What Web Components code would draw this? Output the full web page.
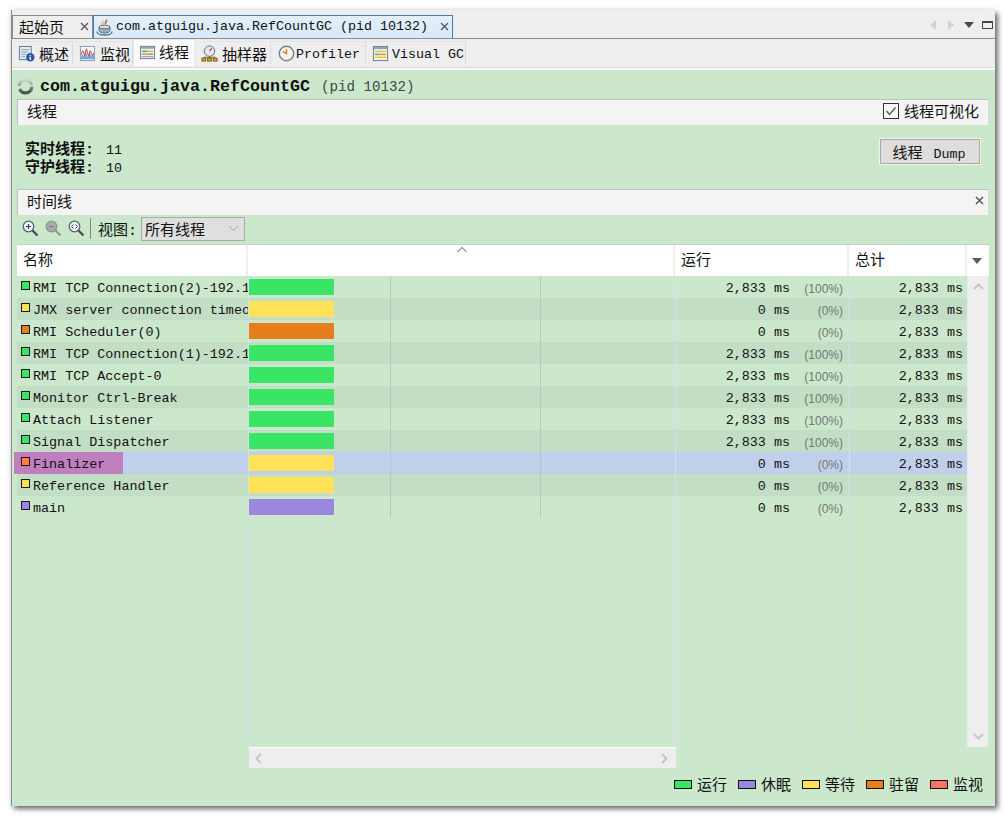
<!DOCTYPE html>
<html>
<head>
<meta charset="utf-8">
<style>
  html, body { margin: 0; padding: 0; background: #fff; }
  body { width: 1005px; height: 816px; overflow: hidden; padding: 10px 0 0 11px; box-sizing: border-box;
    font-family: "Liberation Mono", "Noto Sans CJK SC", monospace; font-size: 13.33px; color: #111; }
</style>
</head>
<body>
<vm-window></vm-window>
<script>
const CJK = `"Liberation Mono", "Noto Sans CJK SC", monospace`;

// icons for the tabs and the toolbar, all on a 18x18 box
const icons = {
  java: `<svg width="18" height="18" viewBox="0 0 18 18"><path d="M10 0c2 2-3 3-1 7 1-2 4-3 1-7z" fill="#e0702a"/><path d="M7 3c-1 1.500 0 3 0 4" fill="none" stroke="#e9a35f" stroke-width="1.200"/><path d="M3 9h11v3c0 2-2 3-5.500 3S3 14 3 12z" fill="#9aacbd" stroke="#5d7287"/><ellipse cx="8.500" cy="9" rx="5.500" ry="1.800" fill="#d9e1e8" stroke="#5d7287"/><path d="M1 13.500c0 2.500 4 3.500 7.500 3.500s7.500-1 7.500-3.500" fill="none" stroke="#5f7386" stroke-width="1.300"/></svg>`,
  info: `<svg width="18" height="18" viewBox="0 0 18 18"><rect x="1.500" y="1.500" width="12.500" height="14" fill="#e6ebf2" stroke="#5f7894"/><path d="M3.500 5h8.500M3.500 7.500h7M3.500 10h5M3.500 12.500h4" stroke="#8499b2"/><circle cx="13" cy="13" r="4.500" fill="#2a5da8"/><path d="M13 10.500v1M13 12.500v3" stroke="#fff" stroke-width="1.500"/></svg>`,
  monitor: `<svg width="18" height="18" viewBox="0 0 18 18"><rect x="1.500" y="1.500" width="15" height="15" fill="#f4f6f9" stroke="#8a9bb0"/><path d="M2 15l1-6 2 3 2-7 2 8 2-6 2 5 2-3 1 3v3z" fill="#6fa7dc"/><path d="M2 10l2-4 2 5 2-7 2 8 2-6 2 5 2-3" fill="none" stroke="#d9463c"/></svg>`,
  threads: `<svg width="18" height="18" viewBox="0 0 18 18"><rect x="1.500" y="2.500" width="15" height="13" fill="#eef1f4" stroke="#6b7b8c"/><rect x="2" y="3" width="14" height="2" fill="#8ea4bd"/><rect x="3" y="7" width="6" height="1.500" fill="#49b04c"/><rect x="9" y="7" width="6" height="1.500" fill="#e3b23a"/><rect x="3" y="10" width="8" height="1.500" fill="#e08a2c"/><rect x="11" y="10" width="4" height="1.500" fill="#49b04c"/><rect x="3" y="13" width="12" height="1" fill="#8a7fd0"/></svg>`,
  sampler: `<svg width="18" height="18" viewBox="0 0 18 18"><circle cx="9" cy="6.500" r="5.500" fill="#e4e9ef" stroke="#5f6e7d"/><path d="M9 6.500L11.500 3.500" stroke="#c33" stroke-width="1.200"/><path d="M3 13h12M3 13v2M9 12v3M15 13v2" stroke="#8a6420"/><rect x="1" y="14" width="4" height="3" fill="#e8a93a" stroke="#7a5516"/><rect x="7" y="14" width="4" height="3" fill="#e8a93a" stroke="#7a5516"/><rect x="13" y="14" width="4" height="3" fill="#e8a93a" stroke="#7a5516"/></svg>`,
  clock: `<svg width="18" height="18" viewBox="0 0 18 18"><circle cx="9" cy="9" r="7.600" fill="#f8f3e6" stroke="#6f8496" stroke-width="1.500"/><path d="M9 4.500V9L5 7" fill="none" stroke="#e07b2a" stroke-width="1.500"/></svg>`,
  gc: `<svg width="18" height="18" viewBox="0 0 18 18"><rect x="1.500" y="1.500" width="15" height="15" fill="#f7f7ee" stroke="#6b7b8c"/><rect x="2" y="2" width="14" height="2.500" fill="#8ea4bd"/><path d="M3 7h12" stroke="#e6c32c" stroke-width="1.500"/><path d="M3 10h6" stroke="#49b04c" stroke-width="1.500"/><path d="M9 10h6" stroke="#e08a2c" stroke-width="1.500"/><path d="M3 13h12" stroke="#e6c32c" stroke-width="1.500"/><path d="M8 5v11" stroke="#c9ccd0"/></svg>`,
  zoomIn: `<svg width="18" height="18" viewBox="0 0 18 18"><circle cx="6.500" cy="6.500" r="5.300" fill="#eef4f8" stroke="#566573" stroke-width="1.300"/><path d="M4 6.500h5M6.500 4v5" stroke="#33414e" stroke-width="1.200"/><path d="M10.500 10.500l5 5" stroke="#3c4852" stroke-width="2.200"/></svg>`,
  zoomOut: `<svg width="18" height="18" viewBox="0 0 18 18"><circle cx="6.500" cy="6.500" r="5.300" fill="#a3afa8" stroke="#8b968f" stroke-width="1.300"/><path d="M4 6.500h5" stroke="#77827b" stroke-width="1.200"/><path d="M10.500 10.500l5 5" stroke="#8f9a93" stroke-width="2.200"/></svg>`,
  zoomFit: `<svg width="18" height="18" viewBox="0 0 18 18"><circle cx="6.500" cy="6.500" r="5.300" fill="#eef4f8" stroke="#566573" stroke-width="1.300"/><path d="M5.500 4.500l-2 2 2 2M7.500 4.500l2 2-2 2" fill="none" stroke="#33414e"/><path d="M10.500 10.500l5 5" stroke="#3c4852" stroke-width="2.200"/></svg>`
};

class VmTab extends HTMLElement {
  constructor() {
    super();
    this.attachShadow({ mode: 'open' });
    this.shadowRoot.innerHTML = `
      <style>
        :host { display: flex; align-items: center; box-sizing: border-box; height: 23px; white-space: nowrap;
          padding: 0 3px 1px 6px; background: #eeeeee; border: 1px solid #8d8d8d; border-bottom: none; font: 15px ${CJK}; color: #111; }
        :host([active]) { background: linear-gradient(#e3effb, #d9e9f9); border-color: #3c7fb1; padding-left: 2px; }
        .x { margin-left: auto; width: 9px; height: 9px; flex: none; }
        ::slotted(svg) { margin-right: 2px; flex: none; }
      </style>
      <slot></slot>
      <svg class="x" viewBox="0 0 9 9"><path d="M1 1l7 7M8 1l-7 7" stroke="#555" stroke-width="1.300"/></svg>`;
  }
}
customElements.define('vm-tab', VmTab);

class VmSubtab extends HTMLElement {
  constructor() {
    super();
    this.attachShadow({ mode: 'open' });
    this.shadowRoot.innerHTML = `
      <style>
        :host { display: flex; align-items: center; box-sizing: border-box; height: 24px; flex: none;
          background: #eeeeee; border-right: 1px solid #dcdcdc; border-top: 1px solid #e4e4e4;
          font: 15px ${CJK}; color: #111; white-space: nowrap; }
        :host([active]) { background: #fbfbfb; height: 27px; margin-top: -2px; padding-bottom: 2px; border: 1px solid #e8e8e8; border-bottom: none; }
        ::slotted(svg) { width: 17px; height: 17px; flex: none; }
      </style>
      <slot></slot>`;
  }
}
customElements.define('vm-subtab', VmSubtab);

class VmBar extends HTMLElement {
  constructor() {
    super();
    this.attachShadow({ mode: 'open' });
    this.shadowRoot.innerHTML = `
      <style>
        :host { display: flex; align-items: center; box-sizing: border-box; height: 26px; margin: 0 6px 0 5px; padding: 0 9px 4px 9px;
          background: #f4f4f4; border-left: 1px solid #b9c4ba; border-top: 1px solid #b9c4ba; border-right: 1px solid #d4dcd5; font: 15px ${CJK}; color: #111; }
        .end { margin-left: auto; display: flex; align-items: center; }
      </style>
      <slot></slot><span class="end"><slot name="end"></slot></span>`;
  }
}
customElements.define('vm-bar', VmBar);

class VmRow extends HTMLElement {
  constructor() {
    super();
    this.attachShadow({ mode: 'open' });
  }
  connectedCallback() {
    const name = this.getAttribute('name');
    const state = this.getAttribute('state');
    const bar = this.getAttribute('bar') || state;
    this.shadowRoot.innerHTML = `
      <style>
        :host { display: grid; grid-template-columns: 231px 427px 174px 118px; height: 22px; font: 13.400px ${CJK}; color: #111; }
        :host([alt]) { background: #c2dfc6; }
        :host([selected]) { background: #c0d0ec; }
        .name { display: flex; align-items: center; overflow: hidden; white-space: nowrap; padding-left: 4px; box-sizing: border-box; }
        :host([selected]) .name { overflow: visible; }
        .label { display: flex; align-items: center; height: 22px; min-width: 0; }
        :host([selected]) .label { background: #bf7fbf; margin-left: -7px; padding: 0 18px 0 7px; }
        .dot { width: 7px; height: 7px; border: 1px solid #1a1a1a; background: ${state}; margin: -4px 3px 0 0; flex: none; }
        .clip { overflow: hidden; padding-top: 3px; }
        .chart { padding: 3px 0 3px 1px; box-sizing: border-box; }
        .chart i { display: block; width: 85px; height: 16px; background: ${bar}; }
        .num { display: flex; justify-content: flex-end; align-items: center; padding: 3px 4px 0 0; white-space: pre; box-sizing: border-box; }
        .run { padding-right: 5px; }
        .pct { color: #6e7a72; font: 12px "Liberation Sans", sans-serif; width: 54px; text-align: right; padding-right: 1px; box-sizing: border-box; }
      </style>
      <div class="name"><span class="label"><span class="dot"></span><span class="clip">${name}</span></span></div>
      <div class="chart"><i></i></div>
      <div class="num run"><span>${this.getAttribute('run')} ms</span><span class="pct">(${this.getAttribute('pct')}%)</span></div>
      <div class="num"><span>2,833 ms</span></div>`;
  }
}
customElements.define('vm-row', VmRow);

class VmTable extends HTMLElement {
  constructor() {
    super();
    this.attachShadow({ mode: 'open' });
    this.shadowRoot.innerHTML = `
      <style>
        :host { display: block; position: relative; margin: 2px 6px 0 5px; height: 524px; }
        .head { display: grid; grid-template-columns: 231px 427px 174px 118px 21px; height: 32px; background: #fff;
          border-top: 1px solid #c7cfc8; box-sizing: border-box; font: 15px ${CJK}; color: #111; }
        .head div { display: flex; align-items: center; padding: 0 0 3px 6px; border-right: 2px solid #eef0ef; box-sizing: border-box; position: relative; }
        .sort { position: absolute; top: 1px; left: 208px; }
        .menu { justify-content: center; padding: 0 !important; border: none !important; }
        .body { position: relative; height: 471px; display: grid; grid-template-columns: 950px 21px; }
        .rows { position: relative; }
        .lines { position: absolute; top: 0; left: 0; right: 0; height: 471px; pointer-events: none; }
        .lines i { position: absolute; top: 0; bottom: 0; width: 1px; background: #d3e0ee; }
        .lines b { position: absolute; top: 0; height: 242px; width: 1px; background: #bcc5bf; }
        .vs { background: #eeeeee; border-left: 1px solid #e5e9f4; display: flex; flex-direction: column; justify-content: space-between; align-items: center; padding: 7px 0 7px; box-sizing: border-box; }
        .hs { position: absolute; left: 232px; top: 503px; width: 427px; height: 21px; background: #eeeeee; border-top: 1px solid #fff;
          display: flex; justify-content: space-between; align-items: center; padding: 0 8px 0 6px; box-sizing: border-box; }
      </style>
      <div class="head">
        <div>名称</div>
        <div><svg class="sort" width="12" height="7" viewBox="0 0 12 7"><path d="M1.500 6L6 1.500 10.500 6" fill="none" stroke="#a4a4a4" stroke-width="1.500"/></svg></div>
        <div>运行</div>
        <div>总计</div>
        <div class="menu"><svg width="11" height="6" viewBox="0 0 11 6"><path d="M0 0h10L5 6z" fill="#5c5c5c"/></svg></div>
      </div>
      <div class="body">
        <div class="rows"><slot></slot>
          <div class="lines">
            <i style="left:231px"></i><i style="left:658px"></i><i style="left:832px"></i>
            <b style="left:373px"></b><b style="left:523px"></b>
          </div>
        </div>
        <div class="vs">
          <svg width="11" height="7" viewBox="0 0 11 7"><path d="M1 6l4.500-4.500L10 6" fill="none" stroke="#c6c6c6" stroke-width="2"/></svg>
          <svg width="11" height="7" viewBox="0 0 11 7"><path d="M1 1l4.500 4.500L10 1" fill="none" stroke="#c6c6c6" stroke-width="2"/></svg>
        </div>
      </div>
      <div class="hs">
        <svg width="7" height="11" viewBox="0 0 7 11"><path d="M6 1L1.500 5.500 6 10" fill="none" stroke="#c6c6c6" stroke-width="2"/></svg>
        <svg width="7" height="11" viewBox="0 0 7 11"><path d="M1 1l4.500 4.500L1 10" fill="none" stroke="#c6c6c6" stroke-width="2"/></svg>
      </div>`;
  }
}
customElements.define('vm-table', VmTable);

class VmLegend extends HTMLElement {
  constructor() {
    super();
    this.attachShadow({ mode: 'open' });
    const items = [['运行', '#3ae566'], ['休眠', '#9b87de'], ['等待', '#ffe257'], ['驻留', '#e67e1e'], ['监视', '#ff7261']];
    this.shadowRoot.innerHTML = `
      <style>
        :host { display: flex; justify-content: flex-end; gap: 11px; padding-right: 12px; font: 15px ${CJK}; color: #111; }
        span { display: flex; align-items: center; gap: 5px; height: 20px; }
        i { display: block; width: 16px; height: 7px; border: 1px solid #111; margin-top: 1px; }
      </style>
      ${items.map(([t, c]) => `<span><i style="background:${c}"></i>${t}</span>`).join('')}`;
  }
}
customElements.define('vm-legend', VmLegend);

const GREEN = '#3ae566', YELLOW = '#ffe257', ORANGE = '#e67e1e', PURPLE = '#9b87de';
const threads = [
  ['RMI TCP Connection(2)-192.1', GREEN, GREEN, '2,833', 100],
  ['JMX server connection timeo', YELLOW, YELLOW, '0', 0],
  ['RMI Scheduler(0)', ORANGE, ORANGE, '0', 0],
  ['RMI TCP Connection(1)-192.1', GREEN, GREEN, '2,833', 100],
  ['RMI TCP Accept-0', GREEN, GREEN, '2,833', 100],
  ['Monitor Ctrl-Break', GREEN, GREEN, '2,833', 100],
  ['Attach Listener', GREEN, GREEN, '2,833', 100],
  ['Signal Dispatcher', GREEN, GREEN, '2,833', 100],
  ['Finalizer', '#ff8040', YELLOW, '0', 0],
  ['Reference Handler', YELLOW, YELLOW, '0', 0],
  ['main', PURPLE, PURPLE, '0', 0]
];

class VmWindow extends HTMLElement {
  constructor() {
    super();
    this.attachShadow({ mode: 'open' });
    const rows = threads.map(([n, s, b, r, p], i) => {
      const alt = i % 2 === 1 ? ' alt' : '';
      const sel = n === 'Finalizer' ? ' selected' : '';
      return `<vm-row name="${n}" state="${s}" bar="${b}" run="${r}" pct="${p}"${alt}${sel}></vm-row>`;
    }).join('');
    this.shadowRoot.innerHTML = `
      <style>
        :host { display: flex; flex-direction: column; box-sizing: border-box; width: 984px; height: 796px; background: #eeeeee;
          border-left: 1px solid #8a8a8a; box-shadow: 3px 3px 5px rgba(0,0,0,.55), 0 0 6px rgba(0,0,0,.12); }
        .tabs { display: flex; flex: none; height: 29px; padding-top: 5px; box-sizing: border-box; border-bottom: 1px solid #8d8d90; }
        .tabs vm-tab:first-child { width: 81px; }
        .tabs vm-tab:nth-child(2) { width: 360px; }
        .lat { font-size: 13.330px; }
        .nav { margin-left: auto; display: flex; align-items: center; padding: 0 2px 4px 0; }
        .subs { display: flex; flex: none; height: 29px; padding: 2px 0 0 1px; box-sizing: border-box; border-bottom: 1px solid #d8d8d8; }
        .subs .lat { padding-top: 1px; }
        .main { flex: 1; background: #cbe8cd; border-top: 2px solid #fff; display: flex; flex-direction: column; min-height: 0; }
        .title { display: flex; align-items: center; height: 29px; padding: 4px 0 0 5px; box-sizing: border-box; font-size: 16.670px; }
        .title svg { margin-right: 6px; }
        .title b { font-weight: bold; }
        .title span { color: #3c4a44; font-size: 14.200px; margin-left: 11px; }
        .check { display: inline-flex; align-items: center; gap: 5px; }
        .stats { display: flex; align-items: flex-start; height: 64px; padding: 17px 7px 0 13px; box-sizing: border-box; }
        .stats dl { margin: 0; display: grid; grid-template-columns: 81px auto; grid-auto-rows: 18px; align-items: center; }
        dt { font: bold 15px/18px ${CJK}; height: 18px; }
        dd { margin: 0; line-height: 18px; }
        .dump { margin: -4px 7px 0 auto; width: 102px; height: 27px; box-sizing: border-box; background: #dddddd; border: 1px solid #f1f3f1; outline: 1px solid #a9a9a9; outline-offset: -2px;
          font: 13.330px ${CJK}; color: #111; padding: 0 2px 0 0; }
        .dump span { font-size: 15px; margin-right: 3px; }
        .tools { display: flex; align-items: center; height: 27px; padding-left: 10px; box-sizing: border-box; font-size: 15px; }
        .tools svg { margin-right: 5px; flex: none; }
        .sep { width: 1px; height: 21px; background: #7c877f; margin: 0 7px 0 -1px; }
        .select { display: flex; align-items: center; box-sizing: border-box; width: 104px; height: 24px; margin-left: 4px; padding: 0 5px 0 3px; background: #dfdfdf; border: 1px solid #a7aca8; }
        .select svg { margin: 0 0 0 auto; }
        vm-legend { margin-top: 6px; }
      </style>
      <div class="tabs">
        <vm-tab>起始页</vm-tab>
        <vm-tab active>${icons.java}<span class="lat">com.atguigu.java.RefCountGC (pid 10132)</span></vm-tab>
        <div class="nav">
          <svg width="7" height="10" viewBox="0 0 7 10"><path d="M6 0v10L0 5z" fill="#d2d2d2"/></svg>
          <svg width="7" height="10" viewBox="0 0 7 10" style="margin-left:11px"><path d="M0 0v10l6-5z" fill="#d2d2d2"/></svg>
          <svg width="10" height="6" viewBox="0 0 10 6" style="margin-left:9px"><path d="M0 0h10L5 6z" fill="#4a4a4a"/></svg>
          <svg width="11" height="8" viewBox="0 0 11 8" style="margin-left:8px"><rect x=".5" y=".5" width="10" height="7" fill="none" stroke="#444"/><path d="M0 1.500h11" stroke="#444"/></svg>
        </div>
      </div>
      <div class="subs">
        <vm-subtab style="width:60px;padding-left:5px;gap:4px">${icons.info}概述</vm-subtab>
        <vm-subtab style="width:60px;padding-left:6px;gap:4px">${icons.monitor}监视</vm-subtab>
        <vm-subtab active style="width:62px;padding-left:5px;gap:3px">${icons.threads}线程</vm-subtab>
        <vm-subtab style="width:76px;padding-left:6px;gap:4px">${icons.sampler}抽样器</vm-subtab>
        <vm-subtab style="width:95px;padding-left:7px;gap:1px">${icons.clock}<span class="lat">Profiler</span></vm-subtab>
        <vm-subtab style="width:100px;padding-left:6px;gap:3px">${icons.gc}<span class="lat">Visual GC</span></vm-subtab>
      </div>
      <div class="main">
        <div class="title">
          <svg width="17" height="17" viewBox="0 0 16 16"><defs><linearGradient id="sp" x1="0" y1="0" x2="0" y2="1"><stop offset="0" stop-color="#d0d6d2"/><stop offset="1" stop-color="#4c4c4c"/></linearGradient></defs><circle cx="8" cy="8" r="6" fill="none" stroke="url(#sp)" stroke-width="3" stroke-dasharray="16 3"/></svg>
          <b>com.atguigu.java.RefCountGC</b><span>(pid 10132)</span>
        </div>
        <vm-bar>线程<span slot="end" class="check">
          <svg width="16" height="16" viewBox="0 0 16 16"><rect x=".5" y=".5" width="15" height="15" fill="#f8f8f8" stroke="#333"/><path d="M3.500 8l3 3.500L12.500 4.500" fill="none" stroke="#555" stroke-width="1.300"/></svg>线程可视化</span></vm-bar>
        <div class="stats">
          <dl><dt>实时线程:</dt><dd>11</dd><dt>守护线程:</dt><dd>10</dd></dl>
          <button class="dump"><span>线程</span> Dump</button>
        </div>
        <vm-bar>时间线<svg slot="end" width="9" height="9" viewBox="0 0 9 9" style="margin-right:-5px"><path d="M1 1l7 7M8 1l-7 7" stroke="#555" stroke-width="1.500"/></svg></vm-bar>
        <div class="tools">
          ${icons.zoomIn}${icons.zoomOut}${icons.zoomFit}<span class="sep"></span>视图:
          <div class="select">所有线程<svg width="11" height="7" viewBox="0 0 11 7"><path d="M1 1l4.500 4.500L10 1" fill="none" stroke="#aaa"/></svg></div>
        </div>
        <vm-table>${rows}</vm-table>
        <vm-legend></vm-legend>
      </div>`;
  }
}
customElements.define('vm-window', VmWindow);
</script>
</body>
</html>
